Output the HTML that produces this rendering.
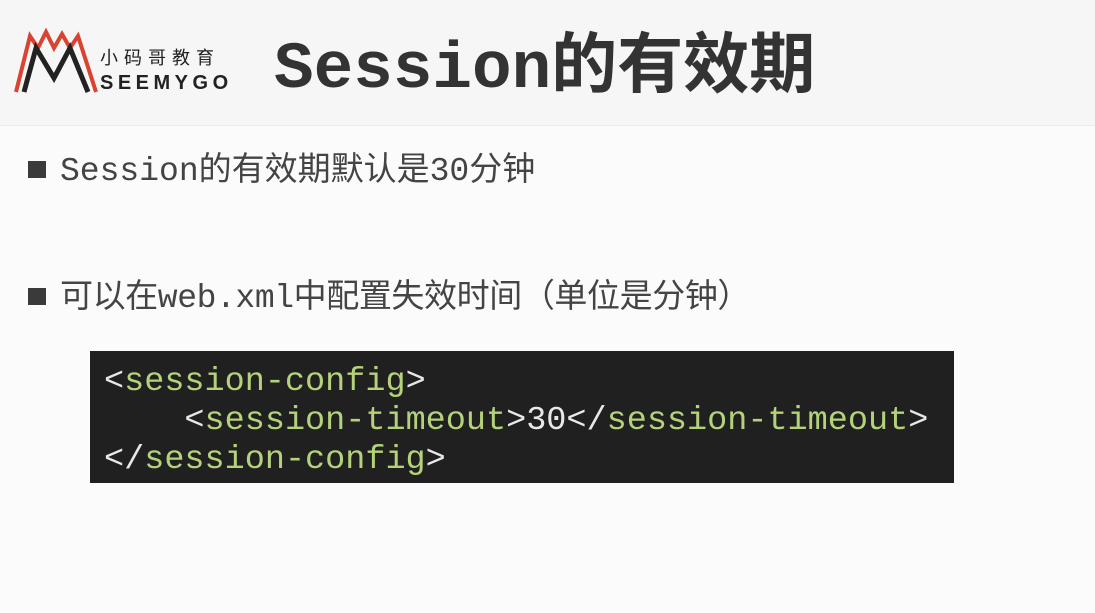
<!DOCTYPE html>
<html><head><meta charset="utf-8"><style>
body{margin:0;width:1095px;height:613px;overflow:hidden;background:#fbfbfb;position:relative;font-family:"Liberation Mono","Noto Sans CJK SC",monospace}
.hdr{position:absolute;left:0;top:0;width:1095px;height:125px;background:#f6f6f6;border-bottom:1px solid #ececec}
.title{position:absolute;left:274px;top:30px;font-size:66px;font-weight:bold;color:#333;line-height:80px;white-space:nowrap}
.b{position:absolute;left:28px;width:18px;height:17px;background:#3a3a3a}
.t{position:absolute;left:60px;font-size:33px;color:#444;line-height:40px;white-space:nowrap}
.code{position:absolute;left:90px;top:351px;width:864px;height:132px;background:#202020}
.code pre{margin:0;position:absolute;left:14px;top:12px;font-family:"Liberation Mono",monospace;font-size:33.5px;line-height:39px;color:#e8e8e8}
.g{color:#b4d27a}
</style></head><body>
<div class="hdr"></div>
<svg style="position:absolute;left:12px;top:26px" width="90" height="70" viewBox="0 0 90 70">
<polyline points="4,66 18,10 26,22 34,6 42,22 50,8 58,22 66,10 84,66" fill="none" stroke="#d9432f" stroke-width="4"/>
<polyline points="12,66 24,22 42,52 58,22 76,66" fill="none" stroke="#222" stroke-width="5"/>
</svg>
<div style="position:absolute;left:100px;top:46px;font-family:'Noto Sans CJK SC',sans-serif;font-size:18px;letter-spacing:6px;color:#222;line-height:22px">小码哥教育</div>
<div style="position:absolute;left:100px;top:72px;font-family:'Liberation Sans',sans-serif;font-weight:bold;font-size:20px;letter-spacing:4.5px;color:#222;line-height:22px">SEEMYGO</div>
<div class="title">Session的有效期</div>
<div class="b" style="top:161px"></div>
<div class="t" style="top:152px">Session的有效期默认是30分钟</div>
<div class="b" style="top:288px"></div>
<div class="t" style="top:279px;letter-spacing:-0.4px">可以在web.xml中配置失效时间（单位是分钟）</div>
<div class="code"><pre>&lt;<span class="g">session-config</span>&gt;
    &lt;<span class="g">session-timeout</span>&gt;30&lt;/<span class="g">session-timeout</span>&gt;
&lt;/<span class="g">session-config</span>&gt;</pre></div>
</body></html>
